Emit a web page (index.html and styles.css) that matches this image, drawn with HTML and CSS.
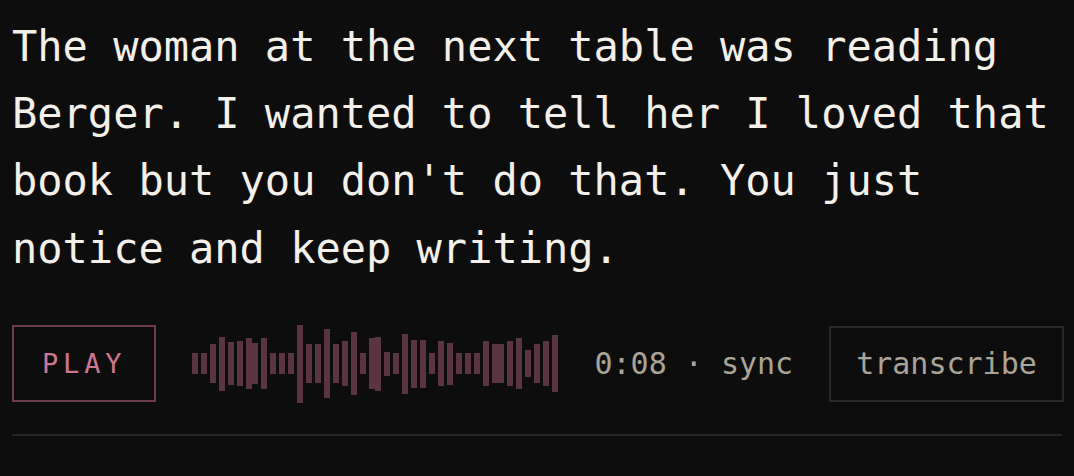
FILE: index.html
```html
<!DOCTYPE html>
<html lang="en">
<head>
<meta charset="utf-8">
<title>Note</title>
<link rel="stylesheet" href="styles.css">
</head>
<body>
<main class="card">
  <p class="quote">The woman at the next table was reading Berger. I wanted to tell her I loved that book but you don't do that. You just notice and keep writing.</p>
  <div class="controls">
    <button class="btn play">PLAY</button>
    <div class="wave" aria-hidden="true">
      <span class="bar" style="height:21px"></span>
      <span class="bar" style="height:21px"></span>
      <span class="bar" style="height:39px"></span>
      <span class="bar" style="height:54px"></span>
      <span class="bar" style="height:43px"></span>
      <span class="bar" style="height:45px"></span>
      <span class="bar" style="height:51px"></span>
      <span class="bar join" style="height:41px"></span>
      <span class="bar" style="height:51px"></span>
      <span class="bar" style="height:21px"></span>
      <span class="bar" style="height:21px"></span>
      <span class="bar" style="height:21px"></span>
      <span class="bar" style="height:78px"></span>
      <span class="bar" style="height:39px"></span>
      <span class="bar" style="height:39px"></span>
      <span class="bar" style="height:69px"></span>
      <span class="bar" style="height:39px"></span>
      <span class="bar" style="height:45px"></span>
      <span class="bar" style="height:63px"></span>
      <span class="bar" style="height:21px"></span>
      <span class="bar" style="height:51px"></span>
      <span class="bar join" style="height:54px"></span>
      <span class="bar" style="height:24px"></span>
      <span class="bar" style="height:21px"></span>
      <span class="bar" style="height:60px"></span>
      <span class="bar" style="height:48px"></span>
      <span class="bar" style="height:48px"></span>
      <span class="bar" style="height:21px"></span>
      <span class="bar" style="height:45px"></span>
      <span class="bar" style="height:42px"></span>
      <span class="bar" style="height:21px"></span>
      <span class="bar" style="height:21px"></span>
      <span class="bar" style="height:21px"></span>
      <span class="bar" style="height:45px"></span>
      <span class="bar" style="height:39px"></span>
      <span class="bar join" style="height:39px"></span>
      <span class="bar" style="height:45px"></span>
      <span class="bar" style="height:51px"></span>
      <span class="bar" style="height:27px"></span>
      <span class="bar" style="height:39px"></span>
      <span class="bar" style="height:45px"></span>
      <span class="bar" style="height:57px"></span>
    </div>
    <span class="time">0:08 · sync</span>
    <button class="btn transcribe">transcribe</button>
  </div>
  <div class="rule"></div>
</main>
</body>
</html>
```

FILE: styles.css
```css
html, body {
  margin: 0;
  padding: 0;
  background: #0e0d0d;
}

body {
  font-family: "DejaVu Sans Mono", "Liberation Mono", monospace;
  color: #f2efe9;
}

.card {
  padding: 13px 12px 0;
}

.quote {
  margin: 0;
  font-size: 42px;
  line-height: 67.2px;
  color: #f3f0ea;
}

.controls {
  margin-top: 43px;
  display: flex;
  align-items: center;
  gap: 36px;
}

.btn {
  font-family: "DejaVu Sans Mono", "Liberation Mono", monospace;
  background: transparent;
  border: 2px solid #2a2826;
  margin: 0;
  display: flex;
  align-items: center;
  justify-content: center;
  box-sizing: border-box;
  cursor: pointer;
}

.play {
  height: 77px;
  padding: 0 28px;
  font-size: 27px;
  letter-spacing: 0.18em;
  color: #cc7690;
  border-color: #6d3b4b;
}

.wave {
  height: 78px;
  display: flex;
  align-items: center;
  gap: 3px;
}

.bar {
  display: block;
  width: 6px;
  background: #5a3440;
}

.bar.join {
  margin-left: -3px;
}

.time {
  font-size: 30px;
  color: #aaa498;
  white-space: pre;
}

.transcribe {
  margin-left: auto;
  height: 76px;
  padding: 0 25px;
  font-size: 30px;
  color: #aaa498;
  border-color: #2a2826;
}

.rule {
  margin-top: 31px;
  border-top: 2px solid #272523;
}
```
